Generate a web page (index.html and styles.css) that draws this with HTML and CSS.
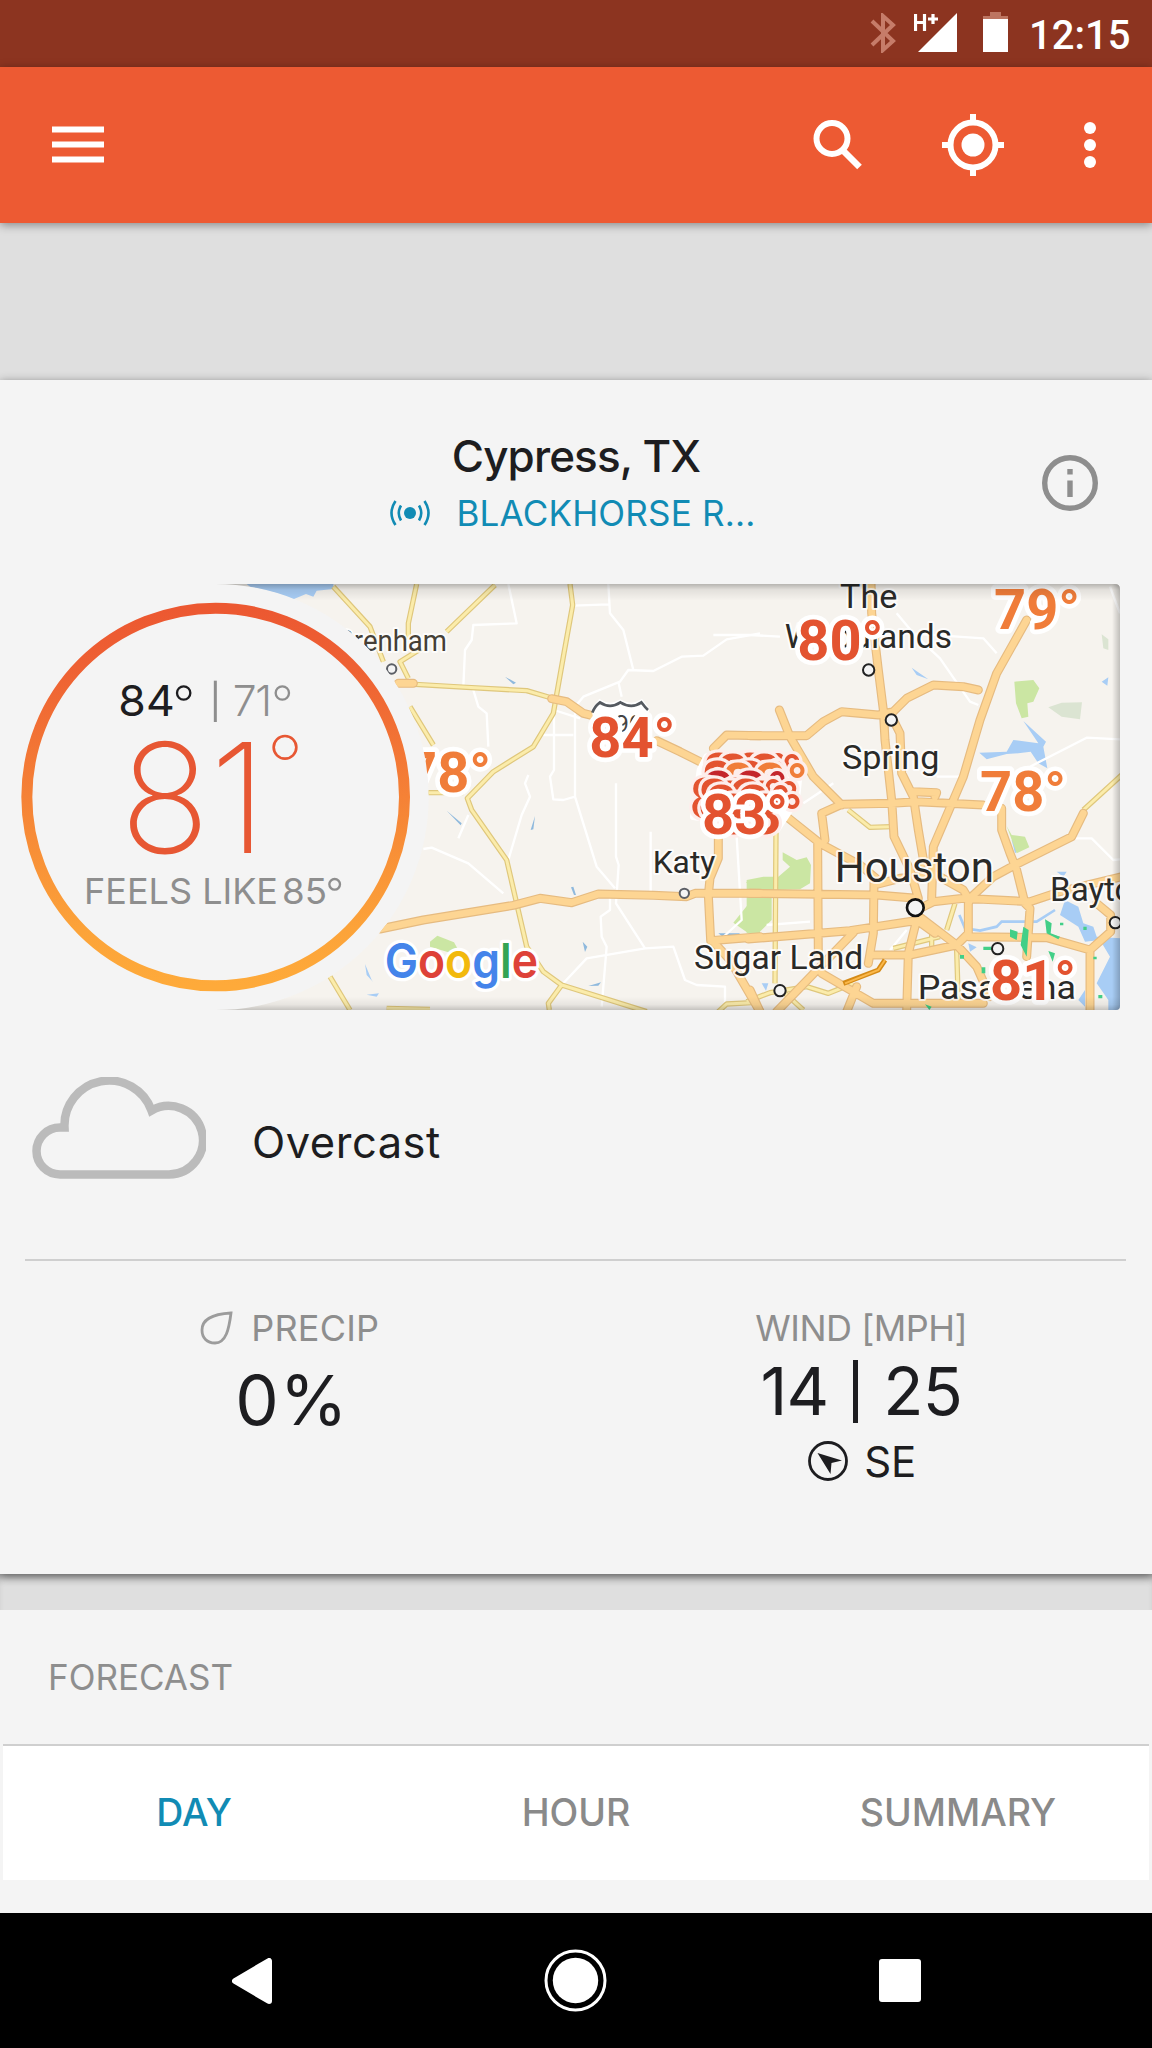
FILE: index.html
```html
<!DOCTYPE html>
<html lang="en">
<head>
<meta charset="utf-8">
<title>Cypress, TX weather</title>
<link rel="stylesheet" href="styles.css">
</head>
<body>
<header class="status">
  <svg class="bt" width="26" height="40" viewBox="0 0 26 40"><path d="M2 8 L23 28 L13 37 V3 L23 12 L2 32" fill="none" stroke="#c67c69" stroke-width="4"/></svg>
  <svg class="signal" width="44" height="40" viewBox="0 0 44 40"><path d="M43 0V39H4Z" fill="#fff"/><path d="M1.500 1V18M10.500 1V18M1.500 9.500H10.500M14 6H24M19 1V11" stroke="#fff" stroke-width="3.200" fill="none"/></svg>
  <svg class="battery" width="25" height="40" viewBox="0 0 25 40"><path d="M7 0H18V4H25V8H0V4H7Z" fill="#bd7561"/><path d="M0 7H25V40H0Z" fill="#fff"/></svg>
  <span class="clock">12:15</span>
</header>
<nav class="appbar">
  <svg class="menu" width="52" height="37" viewBox="0 0 52 37"><path d="M0 3.500H52M0 18.500H52M0 33.500H52" stroke="#fff" stroke-width="6"/></svg>
  <svg class="search" width="50" height="50" viewBox="0 0 50 50" fill="none" stroke="#fff"><circle cx="19" cy="18.500" r="15.500" stroke-width="6"/><path d="M30 30.500L46.500 47" stroke-width="6.500"/></svg>
  <svg class="locate" width="62" height="62" viewBox="0 0 62 62" fill="none" stroke="#fff" stroke-width="6"><circle cx="31" cy="31" r="22.500"/><circle cx="31" cy="31" r="11.500" fill="#fff" stroke="none"/><path d="M31 0V9M31 53V62M0 31H9M53 31H62"/></svg>
  <svg class="more" width="12" height="46" viewBox="0 0 12 46" fill="#fff"><circle cx="6" cy="6" r="6"/><circle cx="6" cy="23" r="6"/><circle cx="6" cy="40" r="6"/></svg>
</nav>
<div class="ad-slot"></div>

<main class="card">
  <div class="place">
    <div class="place-text">
      <h1>Cypress, TX</h1>
      <div class="station">
        <svg width="40" height="26" viewBox="0 0 40 26" fill="none" stroke="#118bb4" stroke-width="2.600"><circle cx="20" cy="13" r="6" fill="#118bb4" stroke="none"/><path d="M11 5.500Q6.500 13 11 20.500M29 5.500Q33.500 13 29 20.500M5.500 1Q-2.500 13 5.500 25M34.500 1Q42.500 13 34.500 25"/></svg>
        <span>BLACKHORSE R...</span>
      </div>
    </div>
    <svg class="info" width="56" height="56" viewBox="0 0 56 56"><circle cx="28" cy="28" r="25.300" fill="none" stroke="#8e8e8e" stroke-width="5.400"/><path d="M28 14V19.500M28 25.500V42" stroke="#8e8e8e" stroke-width="5.400"/></svg>
  </div>

  <!-- Map units are thirds of a pixel -->
  <svg class="hero" width="1152" height="450" viewBox="0 0 3456 1350">
    <defs>
      <clipPath id="mapclip"><path d="M647 42H3345Q3360 42 3360 57V1308Q3360 1320 3348 1320H647A639 639 0 0 0 647 42Z"/></clipPath>
      <linearGradient id="ring" x1="0" y1="0" x2="0" y2="1"><stop offset="0" stop-color="#ec5831"/><stop offset=".15" stop-color="#ee6033"/><stop offset=".85" stop-color="#fca339"/><stop offset="1" stop-color="#feaa3a"/></linearGradient>
      <linearGradient id="shTop" x1="0" y1="0" x2="0" y2="1"><stop offset="0" stop-opacity=".26"/><stop offset=".35" stop-opacity=".08"/><stop offset="1" stop-opacity="0"/></linearGradient>
      <linearGradient id="shBot" x1="0" y1="1" x2="0" y2="0"><stop offset="0" stop-opacity=".2"/><stop offset=".4" stop-opacity=".06"/><stop offset="1" stop-opacity="0"/></linearGradient>
      <linearGradient id="shRight" x1="1" y1="0" x2="0" y2="0"><stop offset="0" stop-opacity=".22"/><stop offset="1" stop-opacity="0"/></linearGradient>
      <g id="minor">
        <path d="M1000 50L1110 170L1150 275M1250 42L1225 160L1225 210M990 1220L1050 1320M1265 235L1200 275L1225 325"/>
        <g transform="translate(1140 0)"><path d="M570 42L578 105L550 260L520 430L460 530L340 605L262 685L275 720L380 870L410 1000L440 1130L490 1205L545 1245L800 1325M545 1245L505 1300L508 1320M105 343L260 352L440 362L515 384M90 410L160 525M145 668H250M345 45L200 185M1015 1325L1040 1302L1115 1298M20 1315L150 1318"/></g>
        <g transform="translate(2250 0)"><path d="M295 720L360 772L425 770M78 780L75 1240M620 1140L625 1300M1000 720L1115 615M-10 1295L60 1268L170 1250L235 1270L310 1240M100 1265L160 1320M615 1000L590 1080M430 1135L570 1100M545 1090V1130"/></g>
      </g>
      <g id="major">
        <path d="M1195 340H1240"/>
        <g transform="translate(1140 0)"><path d="M0 1077L130 1050L400 1006L480 985L575 998L655 972L820 976L920 980L945 970H1140M515 386L560 395L610 430L690 450M830 512L900 545L960 575M1000 535L1040 495L1140 497M1015 790L1015 865L990 925L985 975L992 1112L1140 1100M1000 1115L1050 1170L1140 1325"/></g>
        <g transform="translate(2250 0)"><path d="M0 970L380 975L500 985M0 497H170L220 455L275 425L385 435L430 425L470 385L550 345L640 350L685 360M363 35L365 130L385 300L400 420L405 510L425 690L432 800L480 900L505 985M425 440L450 490L455 610L490 680L505 780L522 880M490 665L560 668L555 680M830 150L740 310L690 450L640 620L550 830L545 985M88 420L120 500L190 620L275 705M225 810L215 730L275 703L425 700L500 695L700 705M110 740L210 820L330 885L390 935M203 820L205 1160M372 935L370 1090L355 1180M755 715V780L780 850L800 900L825 1000L840 1015L830 1160M1000 730L965 800L795 885L730 920L665 980L655 1000L655 1090L620 1125L480 1155H360M520 1010L550 995L640 985L840 995L930 965L1115 920M515 1045L620 1125L680 1190L720 1280M500 1050L475 1150L470 1325M-5 1107L300 1082L510 1050M655 1100L890 1103L1020 1140V1325M1020 1140L1082 1085V1035L1040 1000M655 985L640 960L560 915L450 925L385 942M310 1088L80 1325M215 1210L370 1300H700M290 1325L320 1250M0 1260L30 1325M500 1050L555 1090"/></g>
      </g>
    </defs>
    <g clip-path="url(#mapclip)">
      <path d="M600 0H3456V1350H600Z" fill="#f6f3ee"/>
      <g fill="#a8cdf5">
        <path d="M740 42H1000V57L950 62L940 80L918 72L880 88L830 70L750 50Z"/>
        <g transform="translate(1140 0)" fill="#8fb9dd"><path d="M375 320L408 338L400 343ZM200 722L245 760L242 766ZM465 738L460 778L452 780ZM573 952L580 950L588 975H582ZM608 1115L622 1130L615 1146ZM625 1248L663 1237L655 1247ZM1015 1090L1080 1090L1065 1102H1030Z"/></g>
        <g transform="translate(-45 0)"><path d="M1140 1182L1160 1230L1165 1237L1145 1215ZM1145 1274L1182 1270L1175 1280Z"/></g>
        <g transform="translate(2250 0)"><path d="M485 293L535 328L500 315ZM820 453L888 515L880 530L892 595L865 580L842 545L805 550L770 552L710 568L688 548L770 545L790 510L865 520ZM1055 335L1075 322L1072 347ZM785 810L810 808L815 835L795 850ZM945 990L985 1010L1000 1060L1030 1070L1040 1100L1110 1105V1325H1075V1290L1040 1240L1080 1160L1050 1110L1005 1115L985 1070L930 1035ZM920 905H950L940 920ZM35 1240H55L48 1262ZM655 1120L680 1132L660 1145ZM985 1290L1005 1260V1310Z"/><path d="M628 1035L645 1075L690 1082L740 1070L755 1055L860 1055L915 1020" fill="none" stroke="#a8cdf5" stroke-width="8"/></g>
      </g>
      <g fill="#cbe6a3">
        <g transform="translate(1140 0)"><path d="M150 1115L172 1097L222 1117L232 1135L215 1150L150 1130ZM1098 937L1140 925V1090H1105L1060 1058L1115 990L1120 955Z"/></g>
        <g transform="translate(2250 0)"><path d="M793 335L850 330L868 355L850 395L832 400L835 440L815 445L798 400ZM98 847L140 870L170 862L183 885L180 940L150 958L65 960L65 1050L25 1090L-10 1090V930L40 920L85 920L120 890L98 870ZM770 768L785 795L825 800L838 832L800 850Z"/><path d="M895 412L935 398L996 397L990 448L935 440ZM1055 193L1075 208V240L1060 235Z" fill="#dbe4d2"/></g>
      </g>
      <g fill="none" stroke="#fff" stroke-width="7" stroke-linejoin="round">
        <g transform="translate(1140 0)"><path d="M385 42L410 160L280 165L275 210L255 240L250 350M280 360L295 410L320 430L325 530M580 107L685 103M685 42L690 130L730 180L760 300M1140 190L1040 208L970 257L905 260L820 303L745 300L720 335L610 380L585 410V680L550 690L520 688L510 620L522 600V420L600 445M490 495H580M585 680L650 890L705 955M708 640V860L716 885L708 1000L795 1135M812 785V965M130 837L155 833L265 880L370 970M445 615L435 640L450 680L425 735L385 870M265 735L235 805M795 1135L880 1130L915 1230L950 1245L1035 1250V1320M795 1135L620 1165L545 1245M690 965V1020L662 1040L665 1100L680 1130L665 1310M715 335L725 380M1070 800L1085 1050L1020 1110"/></g>
        <g transform="translate(2250 0)"><path d="M-110 195H0L90 200M440 130L490 190L570 265L660 395L685 405M480 190L700 205L740 250M840 590L1010 503L1110 508M250 640L160 700M560 620H640M960 805H1025L1090 870L1110 868M50 1065L180 1055M1080 50L1110 130M470 1080L420 1140"/></g>
      </g>
      <use href="#minor" class="minor-case"/><use href="#minor" class="minor-fill"/>
      <use href="#major" class="major-case"/><use href="#major" class="major-fill"/>
      <path d="M2530 1240L2635 1200L2655 1170" fill="none" stroke="#d58b17" stroke-width="15"/><path d="M2535 1240L2635 1200L2655 1170" fill="none" stroke="#fbb84a" stroke-width="6"/>
      <g transform="translate(2250 0)" fill="#42cf87"><path d="M885 1048L905 1060L902 1090L930 1100L925 1108L890 1090ZM780 1078L803 1085L800 1110L780 1100ZM820 1070L836 1080L830 1160L812 1125ZM700 1130H725V1140H700ZM895 1143L915 1150L908 1175ZM695 1192H706V1210H695ZM1030 1160H1040V1168H1030ZM525 1303L545 1310L538 1320ZM1045 1275H1057V1285H1045ZM930 1058H940V1066H930ZM1000 1070H1010V1080H1000ZM630 1155H642V1166H630Z"/></g>

      <g class="pins">
        <circle cx="1175" cy="297" r="14" stroke="#5c5f66"/>
        <circle cx="2053" cy="970" r="14" stroke="#5c5f66"/>
        <circle cx="2606" cy="300" r="17"/><circle cx="2674" cy="450" r="17"/><circle cx="2340" cy="1262" r="17"/><circle cx="2993" cy="1136" r="17"/><circle cx="3346" cy="1058" r="17"/>
        <circle cx="2746" cy="1013" r="25" stroke="#111" stroke-width="8"/>
      </g>
      <path d="M1783 418L1800 397Q1830 415 1861 397Q1895 415 1924 397L1940 418L1930 460Q1935 500 1860 540Q1785 500 1790 460Z" fill="#fff" stroke="#fff" stroke-width="16"/>
      <path d="M1777 428Q1783 410 1800 397Q1830 418 1861 397Q1895 418 1924 397Q1935 412 1944 420" fill="none" stroke="#555a60" stroke-width="8"/>
      <text x="1800" y="485" font-size="70" fill="#444">290</text>
      <g class="town">
        <text x="1010" y="243" font-size="88" textLength="331" lengthAdjust="spacingAndGlyphs" fill="#453f36">Brenham</text>
        <text x="1958" y="910" font-size="92" textLength="188" lengthAdjust="spacingAndGlyphs">Katy</text>
        <text x="2082" y="1198" font-size="102" textLength="508" lengthAdjust="spacingAndGlyphs">Sugar Land</text>
        <text x="2504" y="935" font-size="127" textLength="478" lengthAdjust="spacingAndGlyphs">Houston</text>
        <text x="2526" y="598" font-size="100" textLength="292" lengthAdjust="spacingAndGlyphs">Spring</text>
        <text x="2520" y="115" font-size="98" textLength="172" lengthAdjust="spacingAndGlyphs">The</text>
        <text x="2354" y="235" font-size="100" textLength="502" lengthAdjust="spacingAndGlyphs">Woodlands</text>
        <text x="3150" y="993" font-size="102" textLength="380" lengthAdjust="spacingAndGlyphs">Baytown</text>
        <text x="2753" y="1288" font-size="102" textLength="475" lengthAdjust="spacingAndGlyphs">Pasadena</text>
      </g>
      <g class="temp">
        <text x="1215" y="667" class="warm">78°</text>
        <text x="1768" y="562">84°</text>
        <text x="2392" y="270">80°</text>
        <text x="2982" y="178" class="warm">79°</text>
        <text x="2940" y="722" class="warm">78°</text>
        <text x="2970" y="1290">81°</text>
        <path d="M2120 560L2330 560L2400 590L2390 690L2370 720L2330 780L2080 740L2100 600Z" fill="#fff" stroke-width="20"/>
        <g class="stack">
          <text x="2108" y="670">83°</text>
          <text x="2150" y="672">83°</text>
          <text x="2104" y="692">83°</text>
          <text x="2166" y="700" class="warm">83°</text>
          <text x="2106" y="722" class="hot">83°</text>
          <text x="2069" y="743">83°</text>
          <text x="2141" y="752">83°</text>
          <text x="2094" y="746">83°</text>
          <text x="2116" y="765">83°</text>
          <text x="2151" y="793">83°</text>
        </g>
        <text x="2106" y="793">83°</text>
      </g>
      <text class="google" x="1154" y="1223" textLength="460" lengthAdjust="spacingAndGlyphs"><tspan fill="#4484ea">G</tspan><tspan fill="#de4238">o</tspan><tspan fill="#f2b90d">o</tspan><tspan fill="#4484ea">g</tspan><tspan fill="#34a453">l</tspan><tspan fill="#de4238">e</tspan></text>
      <path d="M640 42H3360V92H640Z" fill="url(#shTop)"/><path d="M640 1280H3360V1320H640Z" fill="url(#shBot)"/><path d="M3336 42H3360V1320H3336Z" fill="url(#shRight)"/>
    </g>
    <circle cx="647" cy="681" r="566.500" fill="none" stroke="url(#ring)" stroke-width="33"/>
    <g class="reading">
      <text x="355" y="438" font-size="128" textLength="169" lengthAdjust="spacingAndGlyphs" fill="#1d1d20">84</text><circle cx="551" cy="369" r="20" stroke="#1d1d20" stroke-width="7"/>
      <path d="M646 332V456" stroke="#8e8e8e" stroke-width="9"/>
      <text x="698" y="438" font-size="128" textLength="118" font-weight="350" fill="#8e8e8e">71</text><circle cx="847" cy="369" r="20" stroke="#8e8e8e" stroke-width="7"/>
      <text class="now" x="360" y="848" textLength="440" lengthAdjust="spacingAndGlyphs">81</text><circle cx="855" cy="532" r="34" stroke="#e75733" stroke-width="8"/>
      <text x="252" y="1001" font-size="107" textLength="582" lengthAdjust="spacingAndGlyphs" fill="#8e8e8e">FEELS LIKE</text>
      <text x="846" y="1001" font-size="107" textLength="135" lengthAdjust="spacingAndGlyphs" fill="#8e8e8e">85</text><circle cx="1004" cy="943" r="16" stroke="#8e8e8e" stroke-width="7"/>
    </g>
  </svg>

  <div class="sky">
    <svg width="174" height="102" viewBox="0 0 174 102"><path d="M28 97.500A23.500 23.500 0 0 1 28 50.500H32.500A44.800 44.800 0 0 1 119.500 33.500A34.300 34.300 0 1 1 137 97.500Z" fill="none" stroke="#bbb" stroke-width="8.500"/></svg>
    <span>Overcast</span>
  </div>

  <div class="stats">
    <section class="stat precip">
      <div class="label"><svg width="33" height="34" viewBox="0 0 33 34"><path d="M31 2C29 18 26 32 15 32C7 32 2 27 2 19C2 7 14 3 31 2Z" fill="none" stroke="#9c9c9c" stroke-width="2.800"/></svg><span>PRECIP</span></div>
      <div class="value">0%</div>
    </section>
    <section class="stat wind">
      <div class="label">WIND [MPH]</div>
      <div class="value"><span>14</span><i class="bar"></i><span>25</span></div>
      <div class="dir"><svg width="40" height="40" viewBox="0 0 40 40"><circle cx="20" cy="20" r="18.500" fill="none" stroke="#1d1d20" stroke-width="2.800"/><path d="M9.500 12L34 19.500L23.500 22L22.500 33Z" fill="#1d1d20"/></svg><span>SE</span></div>
    </section>
  </div>
</main>
<div class="gap"></div>
<section class="forecast">
  <h2>FORECAST</h2>
  <div class="tabs"><span class="active">DAY</span><span>HOUR</span><span>SUMMARY</span></div>
</section>
<footer class="sysnav">
  <svg width="40" height="46" viewBox="0 0 40 46"><path d="M3 23L37 3V43Z" fill="#fff" stroke="#fff" stroke-width="6" stroke-linejoin="round"/></svg>
  <svg width="63" height="63" viewBox="0 0 63 63"><circle cx="31.500" cy="31.500" r="29.500" fill="none" stroke="#fff" stroke-width="3"/><circle cx="31.500" cy="31.500" r="22.700" fill="#fff"/></svg>
  <svg width="42" height="43" viewBox="0 0 42 43"><rect width="42" height="43" rx="3" fill="#fff"/></svg>
</footer>
</body>
</html>
```
FILE: styles.css
```css
* { box-sizing: border-box; }
body { margin: 0; width: 1152px; height: 2048px; overflow: hidden; background: #f4f4f4; color: #1d1d20; font-family: Inter, "Liberation Sans", sans-serif; }
svg { display: block; flex: none; }
h1, h2 { margin: 0; font-weight: 400; }

.status { height: 67px; background: #8c3420; display: flex; justify-content: flex-end; align-items: flex-start; padding: 13px 23px 0 0; }
.signal { margin-left: 18px; }
.battery { margin: -1px 21px 0 25px; }
.clock { font: 500 40px/44px Roboto, sans-serif; color: #fff; width: 100px; margin-top: 1px; white-space: nowrap; }

.appbar { position: relative; height: 156px; background: #ed5a33; display: flex; align-items: center; padding: 0 56px 0 52px; box-shadow: 0 2px 9px rgba(0, 0, 0, .4); }
.menu { margin-right: auto; margin-top: -2px; }
.search { margin-right: 79px; }
.locate { margin-right: 80px; }

.ad-slot { height: 157px; background: #dfdfdf; }

.card { position: relative; height: 1194px; background: #f4f4f4; box-shadow: 0 2px 9px rgba(0, 0, 0, .45); }
.place { height: 190px; display: grid; grid-template-columns: 164px 1fr 164px; }
.place-text { grid-column: 2; padding-top: 48px; text-align: center; }
.place h1 { font-size: 44px; line-height: 56px; font-weight: 500; letter-spacing: -.9px; }
.station { display: flex; justify-content: center; align-items: center; gap: 26px; height: 57px; margin-left: -6px; font-size: 35px; letter-spacing: .2px; color: #118bb4; }
.info { margin: 75px auto 0; }

.minor-case { fill: none; stroke: #dfc77c; stroke-width: 16; stroke-linejoin: round; }
.minor-fill { fill: none; stroke: #fbecab; stroke-width: 9; stroke-linejoin: round; }
.major-case { fill: none; stroke: #e6bb80; stroke-width: 27; stroke-linejoin: round; stroke-linecap: round; }
.major-fill { fill: none; stroke: #fdd593; stroke-width: 20; stroke-linejoin: round; stroke-linecap: round; }
.pins { fill: #f4f4f4; stroke: #222; stroke-width: 6; }
.town { font-family: Roboto, sans-serif; fill: #2a2a28; stroke: rgba(255, 255, 255, .8); stroke-width: 12; paint-order: stroke; stroke-linejoin: round; }
.temp { font: 700 168px Roboto, sans-serif; fill: #e35330; stroke: #fff; stroke-width: 28; paint-order: stroke; stroke-linejoin: round; }
.temp .warm { fill: #f07d3a; }
.temp .hot { fill: #c4262c; }
.stack { stroke: #fdeeec; stroke-width: 20; }
.google { font: 600 146px Inter, sans-serif; stroke: #fff; stroke-width: 20; paint-order: stroke; stroke-linejoin: round; }
.reading { fill: none; }
.now { font-size: 458px; font-weight: 250; fill: #e75733; }

.sky { height: 239px; display: flex; align-items: flex-start; gap: 46px; padding: 57px 0 0 32px; font-size: 43.5px; line-height: 44px; letter-spacing: .5px; }
.sky span { margin-top: 43px; }

.stats { display: grid; grid-template-columns: 1fr 1fr; margin: 0 26px 0 25px; padding-top: 48px; border-top: 2px solid #cfcfcf; }
.precip { padding-right: 21px; }
.wind { padding-left: 21px; }
.label { display: flex; justify-content: center; align-items: center; gap: 18px; height: 38px; margin-bottom: 2px; font-size: 36px; letter-spacing: .2px; color: #8e8e8e; }
.wind .label { letter-spacing: -.5px; }
.value { display: flex; justify-content: center; align-items: center; margin-top: 13px; height: 80px; font-size: 68px; }
.precip .value { font-size: 69px; letter-spacing: .8px; padding-left: 4px; }
.wind .value { margin-top: 4px; gap: 25px; font-size: 66px; letter-spacing: -.8px; }
.bar { width: 5px; height: 63px; background: #1d1d20; }
.dir { display: flex; justify-content: center; align-items: center; gap: 16px; height: 44px; margin-top: 8px; padding-left: 2px; font-size: 42px; }

.gap { height: 36px; background: #dfdfdf; }
.card + .gap { box-shadow: inset 0 8px 8px -5px rgba(0, 0, 0, .3); }
.forecast { height: 303px; padding: 0 3px; background: #f4f4f4; }
.forecast h2 { padding-left: 45px; font-size: 35px; line-height: 134px; height: 134px; color: #8e8e8e; }
.tabs { display: grid; grid-template-columns: repeat(3, 1fr); height: 136px; background: #fff; border-top: 2px solid #cfcfcf; text-align: center; font-size: 37.5px; font-weight: 500; line-height: 134px; color: #8a8a8a; }
.tabs .active { color: #118bb4; }

.sysnav { height: 135px; background: #000; display: flex; align-items: center; gap: 272px; padding-left: 232px; }
```
